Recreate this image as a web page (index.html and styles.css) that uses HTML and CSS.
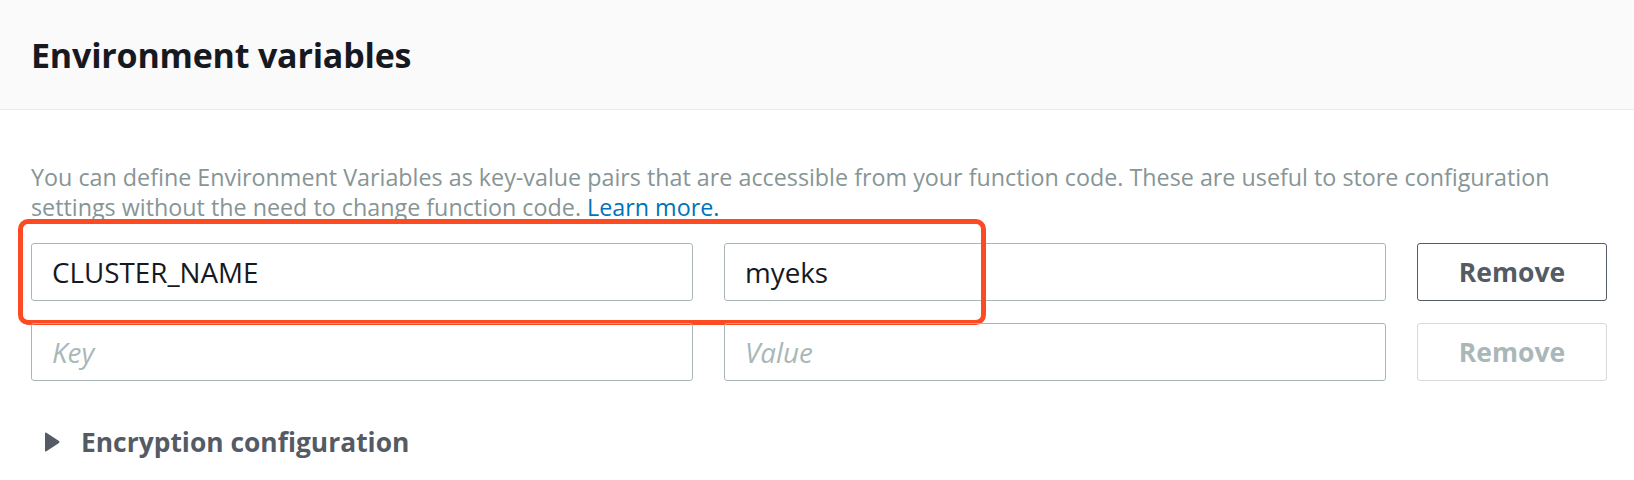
FILE: index.html
```html
<!DOCTYPE html>
<html>
<head>
<meta charset="utf-8">
<link rel="stylesheet" href="styles.css">
</head>
<body>
<div class="panel">
  <div class="panel-header">
    <h2 class="panel-title">Environment variables</h2>
  </div>
  <div class="panel-body">
    <p class="desc">You can define Environment Variables as key-value pairs that are accessible from your function code. These are useful to store configuration settings without the need to change function code. <a class="link" href="#">Learn more.</a></p>
    <div class="rows">
      <div class="row">
        <div class="field">CLUSTER_NAME</div>
        <div class="field">myeks</div>
        <button class="btn">Remove</button>
        <div class="highlight"></div>
      </div>
      <div class="row">
        <div class="field placeholder">Key</div>
        <div class="field placeholder">Value</div>
        <button class="btn btn-disabled">Remove</button>
      </div>
    </div>
    <div class="expander">
      <svg class="caret" width="16" height="20" viewBox="0 0 16 20"><path d="M1 1.5 Q1 0 2.4 0.8 L15 9 Q16 10 15 11 L2.4 19.2 Q1 20 1 18.5 Z" fill="#545b64"/></svg>
      <span class="expander-label">Encryption configuration</span>
    </div>
  </div>
</div>
</body>
</html>
```

FILE: styles.css
```css
html, body {
  margin: 0;
  padding: 0;
  background: #ffffff;
}
body {
  font-family: "Open Sans", "Noto Sans", sans-serif;
  width: 1634px;
  height: 480px;
  overflow: hidden;
}
.panel-header {
  height: 109px;
  background: #fafafa;
  border-bottom: 1px solid #eaeded;
  display: flex;
  align-items: center;
  padding-left: 31px;
}
.panel-title {
  margin: 0;
  font-size: 34px;
  font-weight: 700;
  color: #16191f;
  letter-spacing: -0.2px;
}
.panel-body {
  padding: 52px 27px 0 31px;
}
.desc {
  margin: 0;
  font-size: 23.3px;
  line-height: 30px;
  color: #879596;
}
.link {
  color: #0073bb;
  text-decoration: none;
}
.rows {
  margin-top: 21px;
  display: flex;
  flex-direction: column;
  gap: 22px;
}
.row {
  position: relative;
  display: grid;
  grid-template-columns: 1fr 1fr 190px;
  column-gap: 31px;
}
.field {
  height: 56px;
  border: 1px solid #aab7b8;
  border-radius: 3px;
  padding-left: 20px;
  display: flex;
  align-items: center;
  font-size: 27.8px;
  color: #16191f;
}
.placeholder {
  color: #aab7b8;
  font-style: italic;
}
.btn {
  height: 58px;
  border: 1px solid #545b64;
  border-radius: 3px;
  background: #ffffff;
  font-family: inherit;
  font-size: 26.5px;
  font-weight: 700;
  color: #545b64;
}
.btn-disabled {
  border-color: #d5dbdb;
  color: #aab7b8;
}
.highlight {
  position: absolute;
  left: -13px;
  top: -24px;
  width: 958px;
  height: 96px;
  border: 5px solid #fc4a22;
  border-radius: 10px;
  pointer-events: none;
}
.expander {
  margin-top: 43px;
  display: flex;
  align-items: center;
  padding-left: 13px;
}
.caret {
  display: block;
}
.expander-label {
  margin-left: 21px;
  font-size: 26.4px;
  font-weight: 700;
  color: #545b64;
}
```
